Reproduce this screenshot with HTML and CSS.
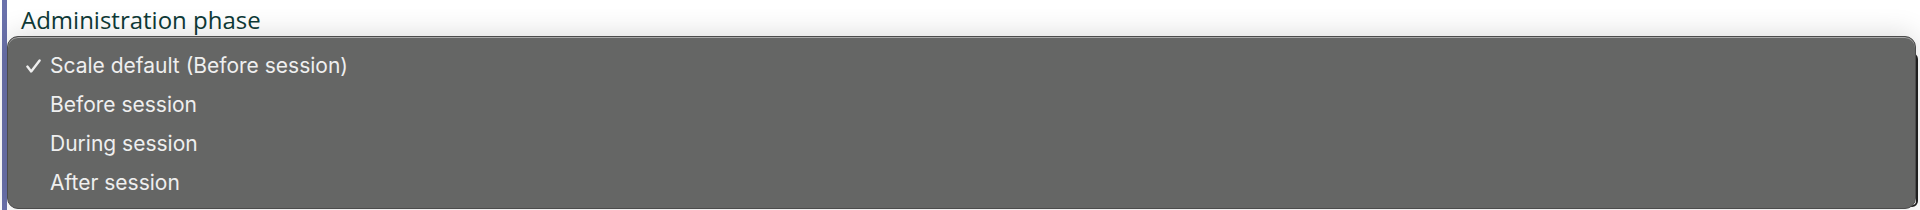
FILE: index.html
```html
<!DOCTYPE html>
<html lang="en">
<head>
    <meta charset="UTF-8">
    <title>Administration phase</title>
    <link rel="stylesheet" href="styles.css">
</head>
<body>
    <div class="field">
        <label class="field-label" for="phase">Administration phase</label>
        <div class="select-box" id="phase"></div>
    </div>

    <!-- native popup menu, open over the select -->
    <ul class="popup-menu">
        <li class="menu-item checked">
            <span class="check"><svg width="15" height="14" viewBox="0 0 15 14"><path d="M1.4 7.6 L5.2 12.4 L13.6 1.4" fill="none" stroke="#efefef" stroke-width="2.4" stroke-linecap="round" stroke-linejoin="round"/></svg></span>
            Scale default (Before session)
        </li>
        <li class="menu-item"><span class="check"></span>Before session</li>
        <li class="menu-item"><span class="check"></span>During session</li>
        <li class="menu-item"><span class="check"></span>After session</li>
    </ul>
</body>
</html>
```

FILE: styles.css
```css
html, body { margin: 0; padding: 0; }
body { width: 1920px; height: 210px; overflow: hidden; background: #fff; position: relative; font-family: "Open Sans", sans-serif; }

.field { margin-left: 2px; height: 210px; border-left: 5px solid #6a71ab; padding-left: 14px; display: flex; flex-direction: column; }
.field-label { display: block; padding-top: 3px; font-size: 24px; line-height: 34px; color: #0e3a37; }
.select-box { margin-top: 16px; margin-right: 2px; height: 150px; border: 2px solid #222; border-radius: 6px; }

.popup-menu {
    position: absolute; left: 7px; top: 36px; width: 1909px; height: 173px;
    margin: 0; padding: 9px 0 0; list-style: none; box-sizing: border-box;
    background: #656665; border: 1px solid #4c4c4c; border-radius: 11px;
    box-shadow: inset 0 1px 0 #a8a8a8, 0 -2px 28px rgba(0, 0, 0, 0.14);
    font-family: Inter, "Noto Sans", sans-serif; font-size: 21px; color: #efefef;
}
.menu-item { display: flex; align-items: center; height: 39px; padding-left: 18px; }
.check { width: 24px; display: flex; align-items: center; }
```
